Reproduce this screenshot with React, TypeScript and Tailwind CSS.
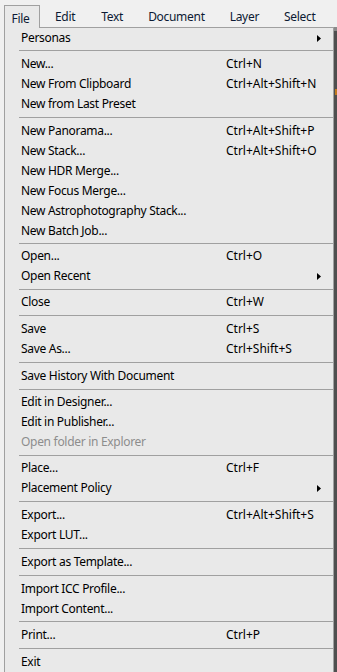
import React from "react";

type Item =
  | { sep: true; h: number }
  | { label: string; shortcut?: string; sub?: boolean; disabled?: boolean };

const items: Item[] = [
  { label: "Personas", sub: true },
  { sep: true, h: 6 },
  { label: "New...", shortcut: "Ctrl+N" },
  { label: "New From Clipboard", shortcut: "Ctrl+Alt+Shift+N" },
  { label: "New from Last Preset" },
  { sep: true, h: 7 },
  { label: "New Panorama...", shortcut: "Ctrl+Alt+Shift+P" },
  { label: "New Stack...", shortcut: "Ctrl+Alt+Shift+O" },
  { label: "New HDR Merge..." },
  { label: "New Focus Merge..." },
  { label: "New Astrophotography Stack..." },
  { label: "New Batch Job..." },
  { sep: true, h: 6 },
  { label: "Open...", shortcut: "Ctrl+O" },
  { label: "Open Recent", sub: true },
  { sep: true, h: 6 },
  { label: "Close", shortcut: "Ctrl+W" },
  { sep: true, h: 7 },
  { label: "Save", shortcut: "Ctrl+S" },
  { label: "Save As...", shortcut: "Ctrl+Shift+S" },
  { sep: true, h: 7 },
  { label: "Save History With Document" },
  { sep: true, h: 7 },
  { label: "Edit in Designer..." },
  { label: "Edit in Publisher..." },
  { label: "Open folder in Explorer", disabled: true },
  { sep: true, h: 6 },
  { label: "Place...", shortcut: "Ctrl+F" },
  { label: "Placement Policy", sub: true },
  { sep: true, h: 7 },
  { label: "Export...", shortcut: "Ctrl+Alt+Shift+S" },
  { label: "Export LUT..." },
  { sep: true, h: 7 },
  { label: "Export as Template..." },
  { sep: true, h: 7 },
  { label: "Import ICC Profile..." },
  { label: "Import Content..." },
  { sep: true, h: 7 },
  { label: "Print...", shortcut: "Ctrl+P" },
  { sep: true, h: 7 },
  { label: "Exit" },
];

function Arrow() {
  return (
    <svg width="4" height="7" viewBox="0 0 4 7" className="block">
      <path d="M0 0 L4 3.5 L0 7 Z" fill="#000" />
    </svg>
  );
}

export default function App() {
  return (
    <div
      className="w-[337px] h-[672px] overflow-hidden bg-[#f0f0f0] flex flex-col text-[12px] text-black"
      style={{ fontFamily: "'Noto Sans', 'Liberation Sans', sans-serif" }}
    >
      {/* Menu bar */}
      <div className="h-[27px] flex items-end shrink-0 tracking-[-0.3px]">
        <div className="ml-[4px] w-[36px] h-[23px] border-l border-t border-r border-[#a0a0a0] bg-[#e9e9e9] flex items-center justify-center pr-[3px] pt-[3px] relative z-10 -mb-[1px]">
          <span className="text-[#0c1a33]">File</span>
        </div>
        <div className="flex items-center h-[23px] pt-[3px] ml-[15px] gap-[25px] text-[#0c1a33]">
          <span className="mr-[1px]">Edit</span>
          <span>Text</span>
          <span>Document</span>
          <span>Layer</span>
          <span>Select</span>
        </div>
      </div>
      {/* Body */}
      <div className="flex flex-1 min-h-0">
        <div className="w-[4px] bg-[#f0f0f0]" />
        <div className="w-[330px] border-l border-r border-t border-[#a0a0a0] bg-[#e9e9e9] flex flex-col">
          {items.map((it, i) =>
            "sep" in it ? (
              <div
                key={i}
                className={
                  it.h === 6
                    ? "h-[6px] flex items-center pl-[14px]"
                    : "h-[7px] flex items-center pl-[14px]"
                }
              >
                <div className="h-px w-full bg-[#a0a0a0]" />
              </div>
            ) : (
              <div key={i} className="h-[20px] flex items-center shrink-0">
                <span
                  className={
                    "pl-[16px] w-[221px] whitespace-nowrap tracking-[-0.3px] " +
                    (it.disabled ? "text-[#8d8d8d]" : "text-black")
                  }
                >
                  {it.label}
                </span>
                <span className="flex-1 whitespace-nowrap">{it.shortcut}</span>
                {it.sub && (
                  <span className="pr-[12px]">
                    <Arrow />
                  </span>
                )}
              </div>
            )
          )}
        </div>
        <div className="w-[3px] bg-[#4f4f4f] flex flex-col">
          <div className="h-[4px] bg-[#8a8a8a]" />
          <div className="h-[58px]" />
          <div className="h-[6px] w-[2px] ml-[1px] bg-[#c07a20]" />
        </div>
      </div>
    </div>
  );
}
